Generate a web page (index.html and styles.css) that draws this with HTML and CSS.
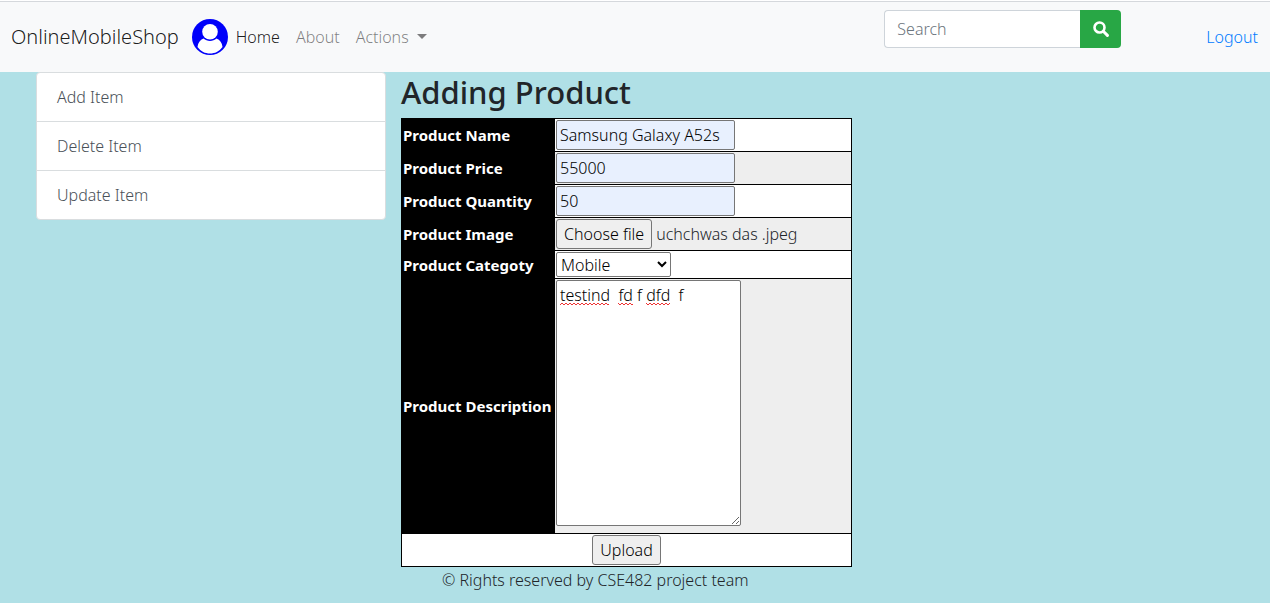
FILE: index.html
```html
<!DOCTYPE html>
<html lang="en">
<head>
<meta charset="utf-8">
<meta name="viewport" content="width=device-width, initial-scale=1">
<title>Adding Product</title>
<link rel="stylesheet" href="styles.css">
</head>
<body>
<nav class="navbar">
  <a class="brand" href="#">OnlineMobileShop</a>
  <svg class="avatar" viewBox="0 0 36 36" aria-hidden="true">
    <circle cx="18" cy="18" r="18" fill="#0000fa"/>
    <circle cx="18" cy="12.7" r="7.8" fill="#fff"/>
    <path d="M11.5 19.5C8 21 6 23.500 5.500 28C9 32.500 13 34.500 18 34.500S27 32.500 30.500 28C30 23.500 28 21 24.500 19.500C21 22.800 15 22.800 11.500 19.500Z" fill="#fff"/>
  </svg>
  <ul class="nav-links">
    <li><a class="active" href="#">Home</a></li>
    <li><a href="#">About</a></li>
    <li><a class="dropdown" href="#">Actions</a></li>
  </ul>
  <form class="search">
    <input type="search" placeholder="Search" aria-label="Search">
    <button type="button" aria-label="Submit search">
      <svg viewBox="0 0 16 16" aria-hidden="true"><circle cx="6.500" cy="6.500" r="5" fill="none" stroke="#fff" stroke-width="2.600"/><path d="M10.300 10.300L14.400 14.400" stroke="#fff" stroke-width="3" stroke-linecap="round"/></svg>
    </button>
  </form>
  <a class="logout" href="#">Logout</a>
</nav>
<main class="layout">
  <div class="list-group">
    <a href="#">Add Item</a>
    <a href="#">Delete Item</a>
    <a href="#">Update Item</a>
  </div>
  <section class="content">
    <h1>Adding Product</h1>
    <form>
      <table class="product-table">
        <tr><th scope="row"><label for="name">Product Name</label></th><td><input class="field" id="name" type="text" value="Samsung Galaxy A52s"></td></tr>
        <tr><th scope="row"><label for="price">Product Price</label></th><td><input class="field" id="price" type="text" value="55000"></td></tr>
        <tr><th scope="row"><label for="quantity">Product Quantity</label></th><td><input class="field" id="quantity" type="text" value="50"></td></tr>
        <tr><th scope="row"><label for="image">Product Image</label></th><td><div class="file"><input id="image" type="file"><label class="file-button" for="image">Choose file</label><span>uchchwas das .jpeg</span></div></td></tr>
        <tr><th scope="row"><label for="category">Product Categoty</label></th><td><select id="category"><option>Mobile</option></select></td></tr>
        <tr><th scope="row"><label for="description">Product Description</label></th><td><div class="editor"><textarea id="description" spellcheck="false">testind  fd f dfd  f</textarea><svg class="spelling" viewBox="0 0 120 4" aria-hidden="true"><defs><pattern id="wave" width="4" height="4" patternUnits="userSpaceOnUse"><path d="M0 3L2 1L4 3" fill="none" stroke="#e33" stroke-width="1"/></pattern></defs><path d="M0 0H49V4H0ZM58 0H73V4H58ZM86 0H110V4H86Z" fill="url(#wave)"/></svg></div></td></tr>
        <tr><td class="actions" colspan="2"><button class="upload" type="button">Upload</button></td></tr>
      </table>
    </form>
    <footer>© Rights reserved by CSE482 project team</footer>
  </section>
</main>
</body>
</html>
```
FILE: styles.css
```css
* { box-sizing: border-box; }
body {
  margin: 0;
  background: #b0e0e6;
  color: #212529;
  font: 300 16px/24px "Noto Sans", "Liberation Sans", sans-serif;
}
a { color: #007bff; text-decoration: none; }
input, button, select, textarea { font: inherit; margin: 0; }
.navbar {
  display: flex;
  align-items: center;
  margin-top: 1px;
  height: 71px;
  padding: 0 12px 0 11px;
  background: #f8f9fa;
  border-top: 1px solid #d5d8dc;
  box-shadow: 0 -1px #fff;
}
.brand { font-size: 20px; line-height: 30px; color: rgba(0, 0, 0, .9); }
.avatar { flex: none; width: 36px; height: 36px; margin-left: 13px; }
.nav-links { display: flex; margin: 0; padding: 0; list-style: none; }
.nav-links a { padding: 8px; color: rgba(0, 0, 0, .5); }
.nav-links .active { color: rgba(0, 0, 0, .9); }
.dropdown::after {
  content: "";
  display: inline-block;
  margin-left: 8px;
  vertical-align: 4px;
  border: 5px solid transparent;
  border-top-color: currentColor;
  border-bottom: 0;
}
.search { display: flex; align-self: flex-start; margin: 8px 85px 0 auto; height: 38px; }
.search input {
  width: 196px;
  padding: 6px 12px;
  border: 1px solid #ced4da;
  border-right: 0;
  border-radius: 4px 0 0 4px;
  background: #fff;
  outline: 0;
}
.search input::placeholder { color: #6c757d; opacity: 1; }
.search button {
  display: grid;
  place-items: center;
  width: 41px;
  padding: 0;
  border: 0;
  border-radius: 0 4px 4px 0;
  background: #28a745;
}
.search svg { width: 16px; height: 16px; }
.layout {
  display: grid;
  grid-template-columns: minmax(160px, 350px) auto;
  justify-content: start;
  align-items: start;
  gap: 15px;
  padding: 0 36px;
}
.list-group { border: 1px solid #d9dddf; border-radius: 4px; background: #fff; overflow: hidden; }
.list-group a { display: block; padding: 12px 20px; color: #495057; }
.list-group a + a { border-top: 1px solid #d9dddf; }
h1 { margin: 1px 0 7px; font-size: 31px; line-height: 38px; font-weight: 500; }
.product-table { min-width: 451px; border-collapse: collapse; background: #fff; }
.product-table th, .product-table td { padding: 1px; border: 1px solid #000; text-align: left; }
.product-table th { width: 153px; background: #000; color: #fff; font-size: 15px; font-weight: 700; white-space: nowrap; }
.product-table tr:nth-child(even) { background: #eee; }
.field, .upload, select, textarea { display: block; }
.field {
  width: 179px;
  height: 30px;
  padding: 1px 3px;
  border: 1px solid #767676;
  border-radius: 2px;
  background: #e8f0fe;
  color: #000;
}
.file { display: flex; align-items: center; gap: 4px; position: relative; height: 30px; }
.file input { position: absolute; width: 1px; height: 1px; opacity: 0; }
.file-button {
  height: 30px;
  padding: 2px 7px;
  border: 1px solid #767676;
  border-radius: 3px;
  background: #efefef;
  color: #000;
}
select { width: 115px; height: 25px; padding: 0; border: 1px solid #767676; border-radius: 2px; background: #fff; color: #000; }
.editor { position: relative; padding-bottom: 6px; }
textarea {
  width: 185px;
  height: 246px;
  padding: 2px 3px;
  border: 1px solid #767676;
  border-radius: 2px;
  color: #000;
}
.spelling { position: absolute; left: 4px; top: 22px; width: 120px; height: 4px; pointer-events: none; }
.upload {
  height: 30px;
  margin: 0 auto;
  padding: 1px 7px;
  border: 1px solid #767676;
  border-radius: 3px;
  background: #efefef;
  color: #000;
}
footer { padding: 1px 41px; }
```
